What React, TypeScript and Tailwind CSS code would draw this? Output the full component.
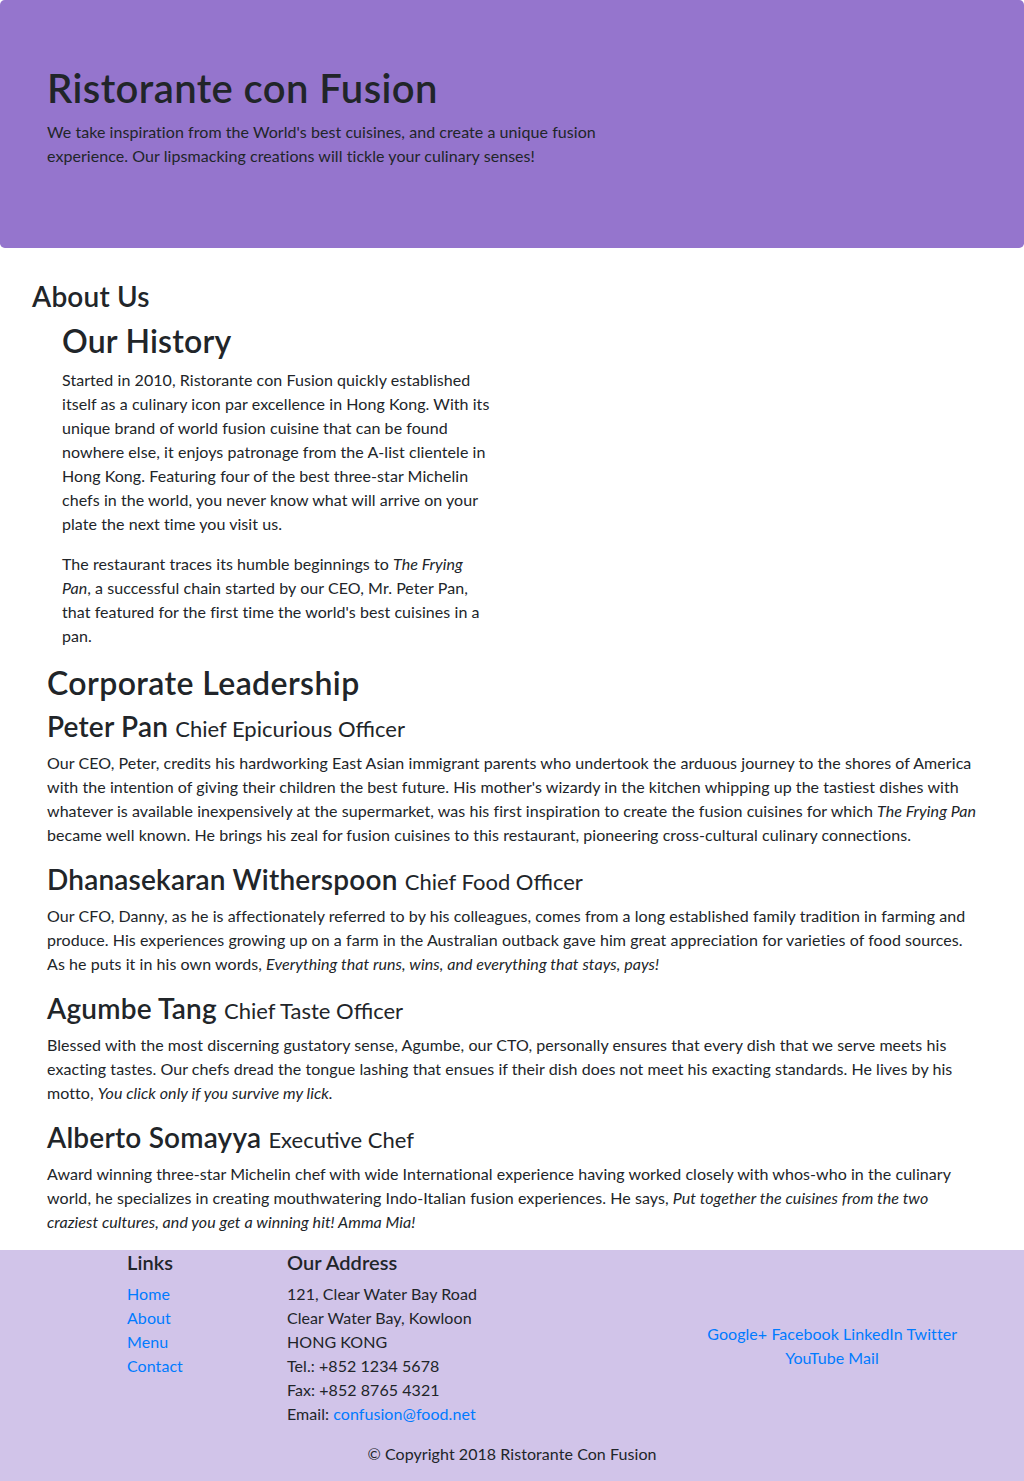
import React from "react";

// Datos del equipo directivo
const leaders = [
  {
    name: "Peter Pan",
    designation: "Chief Epicurious Officer",
    description: (
      <>
        Our CEO, Peter, credits his hardworking East Asian immigrant parents who undertook the arduous journey to the
        shores of America with the intention of giving their children the best future. His mother's wizardy in the
        kitchen whipping up the tastiest dishes with whatever is available inexpensively at the supermarket, was his
        first inspiration to create the fusion cuisines for which <em>The Frying Pan</em> became well known. He brings
        his zeal for fusion cuisines to this restaurant, pioneering cross-cultural culinary connections.
      </>
    ),
  },
  {
    name: "Dhanasekaran Witherspoon",
    designation: "Chief Food Officer",
    description: (
      <>
        Our CFO, Danny, as he is affectionately referred to by his colleagues, comes from a long established family
        tradition in farming and produce. His experiences growing up on a farm in the Australian outback gave him great
        appreciation for varieties of food sources. As he puts it in his own words,{" "}
        <em>Everything that runs, wins, and everything that stays, pays!</em>
      </>
    ),
  },
  {
    name: "Agumbe Tang",
    designation: "Chief Taste Officer",
    description: (
      <>
        Blessed with the most discerning gustatory sense, Agumbe, our CTO, personally ensures that every dish that we
        serve meets his exacting tastes. Our chefs dread the tongue lashing that ensues if their dish does not meet his
        exacting standards. He lives by his motto, <em>You click only if you survive my lick.</em>
      </>
    ),
  },
  {
    name: "Alberto Somayya",
    designation: "Executive Chef",
    description: (
      <>
        Award winning three-star Michelin chef with wide International experience having worked closely with whos-who
        in the culinary world, he specializes in creating mouthwatering Indo-Italian fusion experiences. He says,{" "}
        <em>Put together the cuisines from the two craziest cultures, and you get a winning hit! Amma Mia!</em>
      </>
    ),
  },
];

const links = ["Home", "About", "Menu", "Contact"];

export default function App() {
  return (
    <div className="min-h-screen bg-white text-[16px] leading-6 tracking-[0.06px] text-[#212529] font-['Lato','Noto_Sans',sans-serif]">
      {/* Jumbotron */}
      <header className="mb-8 rounded-[0.3rem] bg-[#9575CD] px-8 py-16">
        <div className="px-[15px]">
          <h1 className="mb-2 text-[40px] font-semibold leading-[1.2] tracking-[0.4px]">Ristorante con Fusion</h1>
          <p className="mb-4 w-[580px]">
            We take inspiration from the World's best cuisines, and create a unique fusion experience. Our lipsmacking
            creations will tickle your culinary senses!
          </p>
        </div>
      </header>

      {/* Sobre nosotros */}
      <main className="px-8">
        <h3 className="mb-2 text-[28px] font-semibold leading-[1.2] tracking-[0.2px]">About Us</h3>

        <section className="w-[460px] pl-[30px]">
          <h2 className="mb-2 text-[32px] font-semibold leading-[1.2] tracking-[0.2px]">Our History</h2>
          <p className="mb-4">
            Started in 2010, Ristorante con Fusion quickly established itself as a culinary icon par excellence in Hong
            Kong. With its unique brand of world fusion cuisine that can be found nowhere else, it enjoys patronage from
            the A-list clientele in Hong Kong. Featuring four of the best three-star Michelin chefs in the world, you
            never know what will arrive on your plate the next time you visit us.
          </p>
          <p className="mb-4">
            The restaurant traces its humble beginnings to <em>The Frying Pan</em>, a successful chain started by our
            CEO, Mr. Peter Pan, that featured for the first time the world's best cuisines in a pan.
          </p>
        </section>

        <section className="px-[15px]">
          <h2 className="mb-2 text-[32px] font-semibold leading-[1.2] tracking-[0.4px]">Corporate Leadership</h2>
          {leaders.map((l) => (
            <div key={l.name}>
              <h3 className="mb-2 text-[28px] font-semibold leading-[33px] tracking-[0.2px]">
                {l.name} <span className="text-[22px] font-normal leading-none tracking-normal">{l.designation}</span>
              </h3>
              <p className="mb-4">{l.description}</p>
            </div>
          ))}
        </section>
      </main>

      {/* Rodapé */}
      <footer className="bg-[#D1C4E9]">
        <div className="mx-auto w-[960px]">
          <div className="flex">
            <div className="ml-[80px] w-[160px] px-[15px]">
              <h5 className="mb-2 text-[20px] font-semibold leading-[1.2]">Links</h5>
              <ul>
                {links.map((t) => (
                  <li key={t}>
                    <a href="#" className="text-[#007bff]">
                      {t}
                    </a>
                  </li>
                ))}
              </ul>
            </div>
            <div className="w-[400px] px-[15px]">
              <h5 className="mb-2 text-[20px] font-semibold leading-[1.2]">Our Address</h5>
              <address className="mb-4 not-italic">
                121, Clear Water Bay Road
                <br />
                Clear Water Bay, Kowloon
                <br />
                HONG KONG
                <br />
                Tel.: +852 1234 5678
                <br />
                Fax: +852 8765 4321
                <br />
                Email:{" "}
                <a href="#" className="text-[#007bff]">
                  confusion@food.net
                </a>
              </address>
            </div>
            <div className="flex w-[320px] items-center justify-center px-[15px] text-center">
              <div>
                <a href="#" className="text-[#007bff]">Google+</a>{" "}
                <a href="#" className="text-[#007bff]">Facebook</a>{" "}
                <a href="#" className="text-[#007bff]">LinkedIn</a>{" "}
                <a href="#" className="text-[#007bff]">Twitter</a>{" "}
                <a href="#" className="text-[#007bff]">YouTube</a>{" "}
                <a href="#" className="text-[#007bff]">Mail</a>
              </div>
            </div>
          </div>
          <div className="flex justify-center">
            <p className="mb-4">© Copyright 2018 Ristorante Con Fusion</p>
          </div>
        </div>
      </footer>
    </div>
  );
}
